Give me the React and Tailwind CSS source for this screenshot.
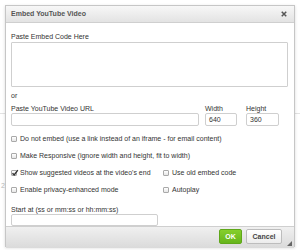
import React from "react";

function Check({ checked }) {
  return (
    <span className="relative w-[6px] h-[6px] shrink-0 border border-[#a9a9a9] rounded-[1px] bg-gradient-to-b from-white to-[#e6e6e6]">
      {checked && (
        <svg viewBox="0 0 8 8" className="absolute -left-[1px] -top-[2px] w-[8px] h-[8px]">
          <path d="M1.5 4.2 L3.2 6 L6.8 1.2" fill="none" stroke="#333" strokeWidth="1.4" />
        </svg>
      )}
    </span>
  );
}

function Option({ label, checked, className = "" }) {
  return (
    <label className={"flex items-center gap-[3px] h-[17px] " + className}>
      <Check checked={checked} />
      <span className="whitespace-nowrap">{label}</span>
    </label>
  );
}

export default function App() {
  return (
    <div className="relative w-[300px] h-[250px] bg-white overflow-hidden font-['Liberation_Sans',Arial,sans-serif] text-[7px] leading-[8px] text-[#333]">
      {/* page behind the dialog */}
      <div className="h-[113px]" />
      <div className="h-px bg-[#e2e2e2]" />
      <div className="pl-[1px] pt-[68px] text-[#bbb]">2</div>

      {/* Dialog */}
      <div className="absolute left-[5px] top-[5px] w-[290px] h-[242px] bg-white border border-[#c6c6c6] shadow-[0_1px_3px_rgba(0,0,0,0.15)] flex flex-col">
        {/* Header */}
        <div className="h-[17px] shrink-0 flex items-center justify-between pl-[5px] pr-[7px] bg-gradient-to-b from-[#f7f7f7] to-[#e3e3e3] border-b border-[#cfcfcf]">
          <span className="font-bold text-[#555]">Embed YouTube Video</span>
          <svg viewBox="0 0 8 8" className="w-[6px] h-[6px]">
            <path d="M1 1 L7 7 M7 1 L1 7" stroke="#555" strokeWidth="2" />
          </svg>
        </div>

        {/* Body */}
        <div className="flex-1 pl-[5px] pr-[6px] pt-[10px]">
          <div>Paste Embed Code Here</div>
          <div className="mt-[1px] h-[45px] border border-[#cfcfcf] rounded-[1px]" />

          <div className="mt-[5px]">or</div>

          <div className="mt-[5px] flex items-end">
            <div className="w-[188px]">
              <div>Paste YouTube Video URL</div>
              <div className="h-[13px] border border-[#cfcfcf] rounded-[2px]" />
            </div>
            <div className="ml-[6px] w-[32px]">
              <div>Width</div>
              <div className="h-[13px] border border-[#cfcfcf] rounded-[2px] pl-[3px] flex items-center">640</div>
            </div>
            <div className="ml-[9px] w-[33px]">
              <div>Height</div>
              <div className="h-[13px] border border-[#cfcfcf] rounded-[2px] pl-[3px] flex items-center">360</div>
            </div>
          </div>

          <div className="mt-[4px]">
            <Option label="Do not embed (use a link instead of an iframe - for email content)" />
            <Option label="Make Responsive (ignore width and height, fit to width)" />
            <div className="flex">
              <Option className="w-[152px]" label="Show suggested videos at the video's end" checked />
              <Option label="Use old embed code" />
            </div>
            <div className="flex">
              <Option className="w-[152px]" label="Enable privacy-enhanced mode" />
              <Option label="Autoplay" />
            </div>
          </div>

          <div className="mt-[8px]">Start at (ss or mm:ss or hh:mm:ss)</div>
          <div className="w-[147px] h-[12px] border border-[#cfcfcf] rounded-[2px]" />
        </div>

        {/* Footer */}
        <div className="relative h-[22px] shrink-0 flex items-start justify-end gap-[4px] pt-[2px] pr-[12px] bg-gradient-to-b from-[#f0f0f0] to-[#dadada] border-t border-[#cfcfcf]">
          <button className="w-[23px] h-[15px] rounded-[2px] border border-[#5fa71a] bg-gradient-to-b from-[#86cf2c] to-[#66b51c] text-white font-bold text-[7px] leading-[13px]">
            OK
          </button>
          <button className="w-[36px] h-[15px] rounded-[2px] border border-[#bdbdbd] bg-gradient-to-b from-white to-[#ececec] text-[#444] font-bold text-[7px] leading-[13px]">
            Cancel
          </button>
          <svg viewBox="0 0 5 5" className="absolute right-[2px] bottom-[2px] w-[5px] h-[5px]">
            <path d="M5 0 L5 5 L0 5 Z" fill="#666" />
          </svg>
        </div>
      </div>
    </div>
  );
}
